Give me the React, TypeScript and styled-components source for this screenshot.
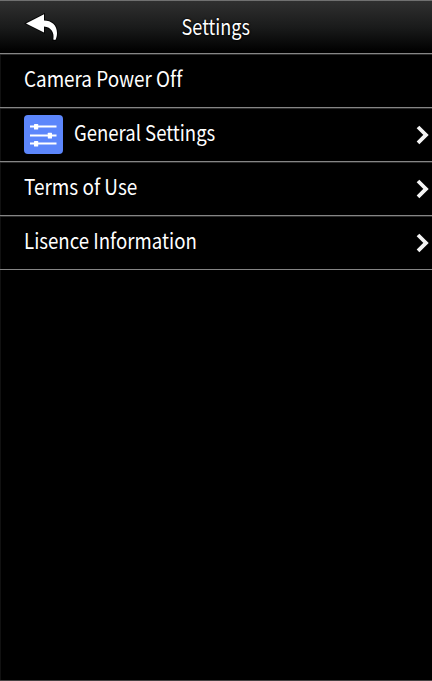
import React from "react";
import styled, { createGlobalStyle } from "styled-components";

const GlobalStyle = createGlobalStyle`
  * { box-sizing: border-box; }
  body { margin: 0; background: #000; }
`;

const Screen = styled.main`
  display: flex;
  flex-direction: column;
  width: 100%;
  height: 681px;
  overflow: hidden;
  background: #000;
  border-bottom: 1px solid #464243;
  color: #fff;
  font-family: "Noto Sans CJK JP", "Open Sans", sans-serif;
  font-size: 21px;
  font-weight: 400;
  font-variant-ligatures: none;
  line-height: 30px;
  white-space: nowrap;
  box-shadow: inset 1px 0 #111;
`;

const Header = styled.header`
  display: grid;
  grid-template-columns: 72px 1fr 72px;
  align-items: center;
  flex: none;
  height: 53px;
  border-top: 1px solid #707070;
  background: linear-gradient(#303030, #1a1b1b 50%, #000 98%);
`;

const BackButton = styled.button`
  display: flex;
  padding: 0 0 0 24px;
  border: 0;
  background: none;
`;

const Title = styled.h1`
  margin: 0;
  font: inherit;
  text-align: center;
  text-shadow: 0 0 2px #000, 0 0 2px #000;
`;

const Label = styled.span<{ $scale: number }>`
  display: inline-block;
  padding-bottom: 5px;
  transform: scaleX(${(p) => p.$scale});
  transform-origin: left center;
`;

const TitleLabel = styled(Label)`
  padding-bottom: 2px;
  transform-origin: center;
`;

const List = styled.ul`
  display: flex;
  flex-direction: column;
  margin: 0;
  padding: 0;
  list-style: none;
  border-bottom: 1px solid #858585;
`;

const Row = styled.li`
  display: flex;
  align-items: center;
  height: 54px;
  padding: 0 3px 0 24px;
  border-top: 1px solid #858585;
  box-shadow: inset 0 1px #2b2b2b;
`;

const Tile = styled.span`
  display: flex;
  flex: none;
  width: 38.5px;
  height: 39px;
  margin-right: 11.5px;
  border-radius: 4px;
  background: #5c86fb;
`;

const Chevron = styled.svg`
  flex: none;
  width: 13px;
  height: 20px;
  margin-left: auto;
`;

const BackIcon = () => (
  <svg width="36" height="30" viewBox="24 12 36 30" aria-hidden="true">
    <path
      d="M26 23.5 L44 14.3 V20.4 C51.5 20.4 57 25 57 33 C57 36 56.3 38.5 55.3 40 L53.3 39.6 C54.6 33 51.5 27.2 44 26.6 V32.5 Z"
      fill="#fff"
      stroke="#000"
      strokeWidth="2"
      strokeOpacity="0.8"
      paintOrder="stroke"
    />
  </svg>
);

const SlidersIcon = () => (
  <svg width="38.5" height="39" viewBox="0 0 38.5 39" fill="#fff" aria-hidden="true">
    <path d="M6 10.6h26.5v2H6zM6 19.6h26.5v2H6zM6 27.6h26.5v2H6z" />
    <rect x="10" y="9" width="4.2" height="5.6" rx=".5" />
    <rect x="23.8" y="17.8" width="4.2" height="5.6" rx=".5" />
    <rect x="10" y="26" width="4.2" height="5.6" rx=".5" />
  </svg>
);

const ChevronIcon = () => (
  <Chevron viewBox="0 0 13 20" aria-hidden="true">
    <path d="M2 2 L10 9.9 L2 17.8" fill="none" stroke="#f4f4f4" strokeWidth="3.8" />
  </Chevron>
);

const items = [
  { label: "Camera Power Off", scale: 0.898, tile: false, link: false },
  { label: "General Settings", scale: 0.882, tile: true, link: true },
  { label: "Terms of Use", scale: 0.902, tile: false, link: true },
  { label: "Lisence Information", scale: 0.888, tile: false, link: true },
];

export default function App() {
  return (
    <>
      <GlobalStyle />
      <Screen>
        <Header>
          <BackButton aria-label="Back"><BackIcon /></BackButton>
          <Title><TitleLabel $scale={0.86}>Settings</TitleLabel></Title>
        </Header>
        <List>
          {items.map((item) => (
            <Row key={item.label}>
              {item.tile && <Tile><SlidersIcon /></Tile>}
              <Label $scale={item.scale}>{item.label}</Label>
              {item.link && <ChevronIcon />}
            </Row>
          ))}
        </List>
      </Screen>
    </>
  );
}
